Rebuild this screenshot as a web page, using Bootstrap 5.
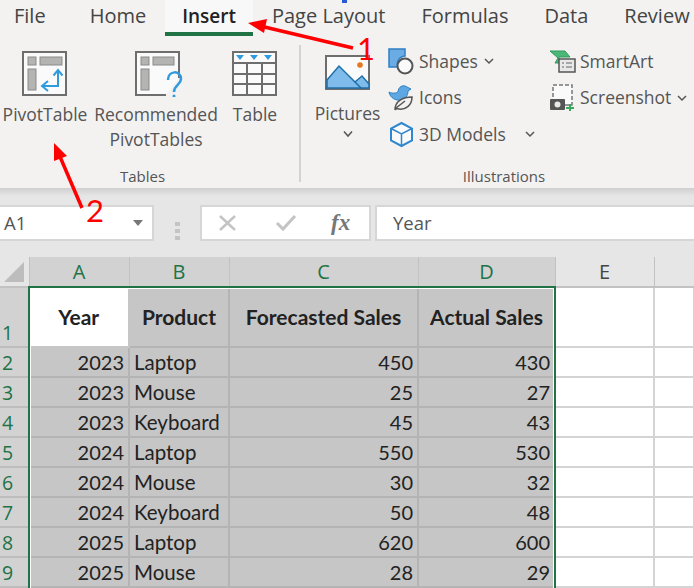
<!DOCTYPE html>
<html lang="en">
<head>
    <meta charset="UTF-8">
    <meta name="viewport" content="width=device-width, initial-scale=1.0">
    <title>Excel Insert PivotTable</title>
    <link href="https://cdn.jsdelivr.net/npm/bootstrap@5.3.1/dist/css/bootstrap.min.css" rel="stylesheet">
    <style>
        body {
            background: #e6e6e6;
            font-family: "Open Sans", "Noto Sans", sans-serif;
            height: 588px;
            overflow: hidden;
            position: relative;
        }
        .tabs { height: 36px; background: #f3f2f1; padding-left: 14px; }
        .tabs .nav-link {
            color: #444;
            font-size: 20px;
            line-height: 26px;
            padding: 3px 0 0;
            white-space: nowrap;
        }
        .tabs li { margin-right: 36px; }
        .tabs li:first-child { margin-right: 44px; }
        .tabs .nav-link.active {
            color: #222;
            font-size: 19px;
            font-weight: 600;
            background: #f8f8f8;
            margin: 0 -17px;
            padding: 3px 17px 0;
            height: 36px;
            border-bottom: 4px solid #217346;
        }
        .ribbon { height: 152px; background: #f3f2f1; color: #555; font-size: 17.5px; line-height: 25px; }
        .group { height: 146px; }
        .group-tables { width: 301px; border-right: 2px solid #d4d3d2; margin-top: 9px; height: 137px; padding-top: 6px; }
        .group-illus { width: 393px; padding-top: 12px; }
        .group-body { flex: 1; }
        .group-label { font-size: 15px; line-height: 20px; color: #555; text-align: center; margin-bottom: -4px; }
        .label-tables { padding-right: 14px; }
        .label-illus { padding-left: 13px; }
        .big-btn { text-align: center; flex: none; }
        .big-btn svg { display: block; margin: 0 auto 5px; }
        .btn-pivot { width: 90px; }
        .btn-rec { width: 132px; }
        .btn-rec svg { margin-left: 45px; }
        .btn-table { width: 60px; margin-left: 3px; }
        .btn-pictures { width: 81px; margin-left: 6px; padding-top: 7px; }
        .big-btn svg.pic { margin-bottom: 10px; }
        .small-col { display: flex; flex-direction: column; gap: 10.5px; flex: none; }
        .col-one { width: 161px; }
        .small-item { display: flex; align-items: center; height: 26px; white-space: nowrap; }
        .small-item svg { flex: none; margin-right: 4px; }
        .small-item svg.chev { margin-left: 6px; margin-right: 0; }
        .small-item svg.chev-far { margin-left: 19px; }
        .formula-bar { height: 69px; background: linear-gradient(#cfcfcf, #e6e6e6 8px); padding-top: 17px; }
        .box { height: 36px; background: #fff; border: 2px solid #d6d6d6; }
        .name-box { width: 154px; border-left: 0; padding: 0 8px 0 4px; color: #555; font-size: 18.5px; }
        .grip { width: 46px; }
        .fx-box { width: 171px; color: #c4c4c4; }
        .btn-check-mark { margin-left: 37px; }
        .fx-input { flex: 1; margin-left: 4px; padding-left: 16px; border-right: 0; color: #555; font-size: 18.5px; }
        .fx-label { font-family: "Liberation Serif", serif; font-style: italic; font-weight: 700; color: #777; font-size: 23px; margin-left: 34px; }
        .sheet { position: relative; height: 331px; overflow: hidden; background: #fff; }
        .sheet table { table-layout: fixed; width: 694px; border-collapse: collapse; font-family: "Lato", sans-serif; font-size: 20.5px; color: #222; }
        .sheet th, .sheet td { border: solid #d4d4d4; border-width: 0 2px 2px 0; height: 30px; padding: 0 4px; overflow: hidden; white-space: nowrap; line-height: 20px; background: #fff; }
        .sheet thead th { background: #e6e6e6; border-color: #c2c2c2; font-weight: 400; text-align: center; color: #444; font-family: "Open Sans", sans-serif; font-size: 20px; border-width: 0 1px 2px 0; }
        .sheet thead th.sel { background: #d2d2d2; color: #217346; }
        .sheet thead th.corner { padding: 0; }
        .sheet tbody th { background: #d2d2d2; border-color: #bdbdbd; border-width: 0 1px 2px 0; color: #217346; font-weight: 400; padding: 0 0 0 2px; font-family: "Open Sans", sans-serif; font-size: 19.5px; vertical-align: bottom; line-height: 26px; }
        .sheet td.sel { background: #c6c6c6; border-color: #b4b4b4; }
        .sheet td.head { font-weight: 700; font-size: 21px; text-align: center; height: 60px; padding: 0; }
        .sheet td.first { background: #fff; border-color: #c6c6c6; }
        .sheet td.num { text-align: right; font-size: 20px; }
        .selection { position: absolute; left: 28px; top: 29px; width: 528px; height: 320px; border: 2px solid #217346; box-shadow: inset 1px 1px 0 #fff, inset -1px 0 0 #fff; pointer-events: none; }
        .notes { position: absolute; left: 0; top: 0; pointer-events: none; }
    </style>
</head>
<body>

    <!-- Tabs -->
    <ul class="nav tabs flex-nowrap">
        <li class="nav-item"><a class="nav-link" href="#">File</a></li>
        <li class="nav-item"><a class="nav-link" href="#">Home</a></li>
        <li class="nav-item"><a class="nav-link active" href="#">Insert</a></li>
        <li class="nav-item"><a class="nav-link" href="#">Page Layout</a></li>
        <li class="nav-item"><a class="nav-link" href="#">Formulas</a></li>
        <li class="nav-item"><a class="nav-link" href="#">Data</a></li>
        <li class="nav-item"><a class="nav-link" href="#">Review</a></li>
    </ul>

    <!-- Ribbon -->
    <div class="ribbon d-flex">
        <div class="group group-tables d-flex flex-column">
            <div class="group-body d-flex">
                <div class="big-btn btn-pivot">
                    <svg width="46" height="46" viewBox="0 0 46 46">
                        <rect x="1" y="1" width="43" height="43" fill="#fafafa" stroke="#6e6e6e" stroke-width="2"/>
                        <rect x="6" y="6" width="8" height="8" fill="#b4b4b2" stroke="#8a8a8a"/>
                        <rect x="18" y="6" width="22" height="8" fill="#b4b4b2" stroke="#8a8a8a"/>
                        <rect x="6" y="18" width="8" height="21" fill="#b4b4b2" stroke="#8a8a8a"/>
                        <path d="M36 20v15H21M31.500 24.500 36 19l4.500 5.500M26 30l-6 5 6 5" fill="none" stroke="#2f9ade" stroke-width="2"/>
                    </svg>
                    PivotTable
                </div>
                <div class="big-btn btn-rec">
                    <svg width="50" height="46" viewBox="0 0 50 46">
                        <path d="M44 27V1H1v43h30" fill="#fafafa" stroke="#6e6e6e" stroke-width="2"/>
                        <rect x="6" y="6" width="8" height="8" fill="#b4b4b2" stroke="#8a8a8a"/>
                        <rect x="18" y="6" width="21" height="8" fill="#b4b4b2" stroke="#8a8a8a"/>
                        <rect x="6" y="18" width="8" height="21" fill="#b4b4b2" stroke="#8a8a8a"/>
                        <path d="M33 29c0-10 13-10 13-1 0 6-7 6-7 13" fill="none" stroke="#2f9ade" stroke-width="2.500"/>
                        <circle cx="39" cy="45" r="1.500" fill="#2f9ade"/>
                    </svg>
                    Recommended<br>PivotTables
                </div>
                <div class="big-btn btn-table">
                    <svg width="46" height="46" viewBox="0 0 46 46">
                        <rect x="1" y="1" width="43" height="43" fill="#fafafa" stroke="#6e6e6e" stroke-width="2"/>
                        <path d="M1 12h43M1 23h43M1 33h43M15 12v32M30 12v32" stroke="#6e6e6e" stroke-width="2" fill="none"/>
                        <path d="M4 4h8l-4 5zM18 4h8l-4 5zM32 4h8l-4 5z" fill="#2f9ade"/>
                    </svg>
                    Table
                </div>
            </div>
            <div class="group-label label-tables">Tables</div>
        </div>
        <div class="group group-illus d-flex flex-column">
            <div class="group-body d-flex">
                <div class="big-btn btn-pictures">
                    <svg class="pic" width="46" height="36" viewBox="0 0 46 36">
                        <rect x="1" y="1" width="43" height="33" fill="#fafafa" stroke="#6e6e6e" stroke-width="2"/>
                        <path d="M2 25 14 11l16 16 7-6 7 8v4H2z" fill="#7fbcec" stroke="#1f6fa8" stroke-width="1.500"/>
                        <path d="M30 27l7 7" stroke="#1f6fa8" stroke-width="1.500"/>
                        <circle cx="35" cy="10" r="2.800" fill="#e8761c"/>
                    </svg>
                    Pictures
                    <svg class="mt-1" width="12" height="8" viewBox="0 0 12 8"><path d="M2 1.500 6 6l4-4.500" fill="none" stroke="#555" stroke-width="1.500"/></svg>
                </div>
                <div class="small-col col-one">
                    <div class="small-item">
                        <svg width="27" height="27" viewBox="0 0 27 27">
                            <path d="M1 1h16v7a8 8 0 0 0-7 11H1z" fill="#6cace4" stroke="#2f7fc1" stroke-width="1.500"/>
                            <circle cx="17" cy="18" r="7.500" fill="#fafafa" stroke="#555" stroke-width="2"/>
                        </svg>
                        Shapes
                        <svg class="chev" width="10" height="8" viewBox="0 0 10 8"><path d="M1 2l4 4 4-4" fill="none" stroke="#555" stroke-width="1.500"/></svg>
                    </div>
                    <div class="small-item">
                        <svg width="27" height="27" viewBox="0 0 27 27">
                            <path d="M1 8c4 2 7 1 9 0 0-5 5-8 9-5l4 2-3 2c0 5-3 8-7 9-5 1-11-2-12-8z" fill="#5ea7e2" stroke="#2f7fc1"/>
                            <path d="M7 26c0-9 8-13 17-13 0 8-6 13-13 12-2 0-3-1-4 1zM8 24l9-7" fill="#f3f2f1" stroke="#555" stroke-width="1.500"/>
                        </svg>
                        Icons
                    </div>
                    <div class="small-item">
                        <svg width="27" height="27" viewBox="0 0 27 27">
                            <path d="M13.500 2 24 7.500v12L13.500 25 3 19.500v-12z" fill="#fafafa" stroke="#2f88cf" stroke-width="2"/>
                            <path d="M3 7.500 13.500 13 24 7.500M13.500 13v12" fill="none" stroke="#2f88cf" stroke-width="1.500"/>
                        </svg>
                        3D Models
                        <svg class="chev chev-far" width="10" height="8" viewBox="0 0 10 8"><path d="M1 2l4 4 4-4" fill="none" stroke="#555" stroke-width="1.500"/></svg>
                    </div>
                </div>
                <div class="small-col">
                    <div class="small-item">
                        <svg width="27" height="27" viewBox="0 0 27 27">
                            <path d="M1 3h15l5 6H10v6H6l3-5z" fill="#4cb878" stroke="#2f9a5c"/>
                            <rect x="10" y="11" width="16" height="13" fill="#e8e8e8" stroke="#555" stroke-width="1.500"/>
                            <path d="M13 15h2M17 15h6M13 19h2M17 19h6" stroke="#666"/>
                        </svg>
                        SmartArt
                    </div>
                    <div class="small-item">
                        <svg width="27" height="27" viewBox="0 0 27 27">
                            <rect x="4" y="1" width="19" height="20" fill="#fafafa" stroke="#777" stroke-width="1.500" stroke-dasharray="4 2"/>
                            <rect x="1" y="15" width="15" height="11" rx="1" fill="#555"/>
                            <circle cx="8.500" cy="20.500" r="3" fill="#e8e8e8"/>
                            <path d="M17 24h8M21 20v7" stroke="#3aa85f" stroke-width="2"/>
                        </svg>
                        Screenshot
                        <svg class="chev" width="10" height="8" viewBox="0 0 10 8"><path d="M1 2l4 4 4-4" fill="none" stroke="#555" stroke-width="1.500"/></svg>
                    </div>
                </div>
            </div>
            <div class="group-label label-illus">Illustrations</div>
        </div>
    </div>

    <!-- Name box and formula bar -->
    <div class="formula-bar d-flex">
        <div class="box name-box d-flex align-items-center justify-content-between">
            A1
            <svg width="12" height="7" viewBox="0 0 12 7"><path d="M1 0h10L6 6z" fill="#777"/></svg>
        </div>
        <div class="grip d-flex justify-content-center align-items-center">
            <svg width="5" height="19" viewBox="0 0 5 19"><path d="M0 0h5v4H0zM0 7h5v4H0zM0 14h5v4H0z" fill="#c4c4c4"/></svg>
        </div>
        <div class="box fx-box d-flex align-items-center">
            <svg class="ms-3" width="20" height="18" viewBox="0 0 20 18"><path d="M2 2l15 14M17 2 2 16" stroke="#c4c4c4" stroke-width="2.500"/></svg>
            <svg class="btn-check-mark" width="22" height="18" viewBox="0 0 22 18"><path d="M2 9l6 6L20 2" fill="none" stroke="#c4c4c4" stroke-width="3"/></svg>
            <span class="fx-label">fx</span>
        </div>
        <div class="box fx-input d-flex align-items-center">Year</div>
    </div>

    <!-- Sheet -->
    <div class="sheet">
        <table id="grid"></table>
        <div class="selection"></div>
    </div>

    <!-- Red callouts over the screenshot -->
    <svg class="notes" width="694" height="588" viewBox="0 0 694 588">
        <path d="M342 0h5v3h-5z" fill="#2a5bd7"/>
        <path d="M353 48 256 25" stroke="#f00" stroke-width="3.500"/>
        <path d="M248 23 267 19 264 33z" fill="#f00"/>
        <path d="M82 208 58 152" stroke="#f00" stroke-width="3.500"/>
        <path d="M54 143 67 156 54 161z" fill="#f00"/>
        <text x="357" y="60" fill="#f00" font-family="Lato, sans-serif" font-size="31">1</text>
        <text x="86" y="222" fill="#f00" font-family="Lato, sans-serif" font-size="31">2</text>
    </svg>

    <script>
        // rows of the sheet, drawn from data
        const rows = [
            [2023, 'Laptop', 450, 430],
            [2023, 'Mouse', 25, 27],
            [2023, 'Keyboard', 45, 43],
            [2024, 'Laptop', 550, 530],
            [2024, 'Mouse', 30, 32],
            [2024, 'Keyboard', 50, 48],
            [2025, 'Laptop', 620, 600],
            [2025, 'Mouse', 28, 29],
            ['', '', '', '']
        ];
        const corner = '<svg width="20" height="20" viewBox="0 0 20 20"><path d="M20 0v20H0z" fill="#bdbdbd"/></svg>';
        const widths = [29, 100, 100, 189, 137, 99, 40];
        let html = '<colgroup>' + widths.map(w => `<col style="width:${w}px">`).join('') + '</colgroup>';
        html += `<thead><tr><th class="corner">${corner}</th>` +
            ['A', 'B', 'C', 'D'].map(c => `<th class="sel">${c}</th>`).join('') +
            '<th>E</th><th></th></tr></thead><tbody>';
        html += '<tr><th>1</th><td class="sel head first">Year</td><td class="sel head">Product</td>' +
            '<td class="sel head">Forecasted Sales</td><td class="sel head">Actual Sales</td><td></td><td></td></tr>';
        rows.forEach((r, i) => {
            html += `<tr><th>${r[0] === '' ? '' : i + 2}</th><td class="sel num">${r[0]}</td><td class="sel">${r[1]}</td>` +
                `<td class="sel num">${r[2]}</td><td class="sel num">${r[3]}</td><td></td><td></td></tr>`;
        });
        document.getElementById('grid').innerHTML = html + '</tbody>';
    </script>

    <script src="https://cdn.jsdelivr.net/npm/bootstrap@5.3.1/dist/js/bootstrap.bundle.min.js"></script>
</body>
</html>
